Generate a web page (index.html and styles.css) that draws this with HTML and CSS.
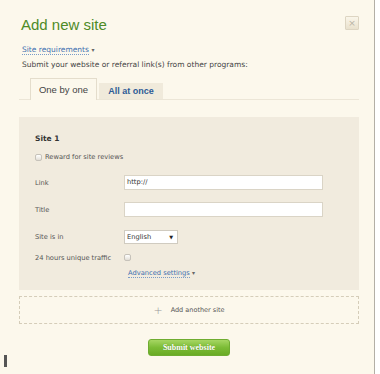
FILE: index.html
```html
<!DOCTYPE html>
<html lang="en">
<head>
  <meta charset="UTF-8" />
  <title>Add new site</title>
  <link rel="stylesheet" href="styles.css">
</head>
<body>
  <div class="dialog">
    <div class="head">
      <h1>Add new site</h1>
      <button class="close">&times;</button>
    </div>

    <div class="req"><a class="dotted">Site requirements</a> <span class="caret">&#9662;</span></div>
    <p class="intro">Submit your website or referral link(s) from other programs:</p>

    <div class="tabs">
      <span class="tab active">One by one</span>
      <span class="tab">All at once</span>
    </div>

    <div class="site">
      <h2>Site 1</h2>
      <label class="check"><span class="box"></span>Reward for site reviews</label>

      <div class="row">
        <span class="lbl">Link</span>
        <span class="field">http://</span>
      </div>
      <div class="row">
        <span class="lbl">Title</span>
        <span class="field"></span>
      </div>
      <div class="row">
        <span class="lbl">Site is in</span>
        <span class="select">English <span class="arrow">&#9660;</span></span>
      </div>
      <div class="row short">
        <span class="lbl">24 hours unique traffic</span>
        <span class="box"></span>
      </div>
      <div class="row short adv">
        <span class="lbl"></span>
        <span><a class="dotted">Advanced settings</a> <span class="caret">&#9662;</span></span>
      </div>
    </div>

    <div class="add"><span class="plus">+</span>Add another site</div>

    <div class="actions">
      <button class="submit">Submit website</button>
    </div>
  </div>

  <div class="mark"></div>
</body>
</html>
```

FILE: styles.css
```css
* { box-sizing: border-box; }
body { margin: 0; background: #fff; font-family: "DejaVu Sans", Verdana, sans-serif; color: #444; }

.dialog {
  position: relative;
  width: 375px; height: 374px;
  background: #fcf8ec; border-right: 1px solid #b3afa6;
  padding: 16px 15px 0 19px;
}

.head { display: flex; justify-content: space-between; align-items: flex-start; }
h1 {
  margin: 0 0 0 2px; font-family: "Liberation Sans", Arial, sans-serif;
  font-size: 15px; line-height: 18px; font-weight: normal; color: #4e8b27;
}
.close {
  width: 14px; height: 14px; padding: 0; margin: 0;
  border: 1px solid #ddd5c2; border-radius: 1px;
  background: linear-gradient(#faf6ea, #e9e1cd);
  color: #b8b2a4; font-size: 9px; line-height: 11px; font-family: "DejaVu Sans", sans-serif;
}

.req { margin: 10px 0 0 3px; font-size: 7.5px; line-height: 11px; }
.dotted { color: #3d6fb0; border-bottom: 1px dotted #7a9cc8; text-decoration: none; }
.caret { color: #666; font-size: 6px; }
.intro { margin: 4px 0 0 3px; font-size: 7.5px; line-height: 11px; color: #444; }

.tabs {
  display: flex; align-items: flex-end; gap: 2px;
  margin-top: 8px; padding-left: 11px; border-bottom: 1px solid #ece6d7;
  font-family: "Liberation Sans", Arial, sans-serif;
}
.tab {
  width: 64px; height: 16px; background: #f0eadb;
  text-align: center; font-size: 9px; line-height: 16px; font-weight: bold; color: #2d5b96;
}
.tab.active {
  width: 67px; height: 22px; margin-bottom: -1px;
  background: #fcf8ec; border: 1px solid #e4ddcc; border-bottom: none;
  font-size: 9.5px; line-height: 21px; font-weight: normal; color: #444;
}

.site {
  margin-top: 17px; width: 340px; background: #f1ebde;
  padding: 16px 0 12px 16px; font-size: 6.7px; color: #555;
}
.site h2 { margin: 0; font-size: 7.5px; line-height: 11px; color: #333; }
.check { display: flex; align-items: center; gap: 3px; margin-top: 8px; line-height: 11px; }
.box {
  display: inline-block; width: 7px; height: 7px;
  border: 1px solid #c6c2ba; border-radius: 2px; background: linear-gradient(#fff, #e2ded6);
}

.row { display: flex; align-items: center; margin-top: 12px; height: 15px; }
.row.short { height: 11px; margin-top: 8px; }
.row.adv { margin-top: 4px; }
.lbl { width: 89px; flex: none; }
.field {
  width: 199px; height: 15px; background: #fff; border: 1px solid #dad4c6;
  padding-left: 2px; line-height: 13px; color: #333;
}
.select {
  display: flex; justify-content: space-between; align-items: center;
  width: 54px; height: 14px; background: #fff; border: 1px solid #d0cbc0;
  padding: 0 4px 0 2px; color: #333;
}
.arrow { font-size: 5px; color: #222; }
.adv .dotted { margin-left: 4px; }

.add {
  display: flex; justify-content: center; align-items: center;
  margin-top: 6px; width: 340px; height: 28px;
  border: 1px dashed #d5cdb9; font-size: 6.5px; color: #555;
}
.plus { font-size: 11px; color: #999; margin-right: 8px; font-weight: 300; }

.actions { display: flex; justify-content: center; width: 340px; margin-top: 15px; }
.submit {
  width: 82px; height: 17px; padding: 0;
  border: 1px solid #6fac31; border-radius: 3px;
  background: linear-gradient(#a6d663, #7cbc36 50%, #69ab25);
  color: #fff; font-family: "Liberation Serif", "Times New Roman", serif;
  font-size: 8px; font-weight: bold; text-shadow: 0 0 1px #5c8f24;
}

.mark { position: absolute; left: 4px; top: 355px; width: 3px; height: 12px; background: #555; }
```
